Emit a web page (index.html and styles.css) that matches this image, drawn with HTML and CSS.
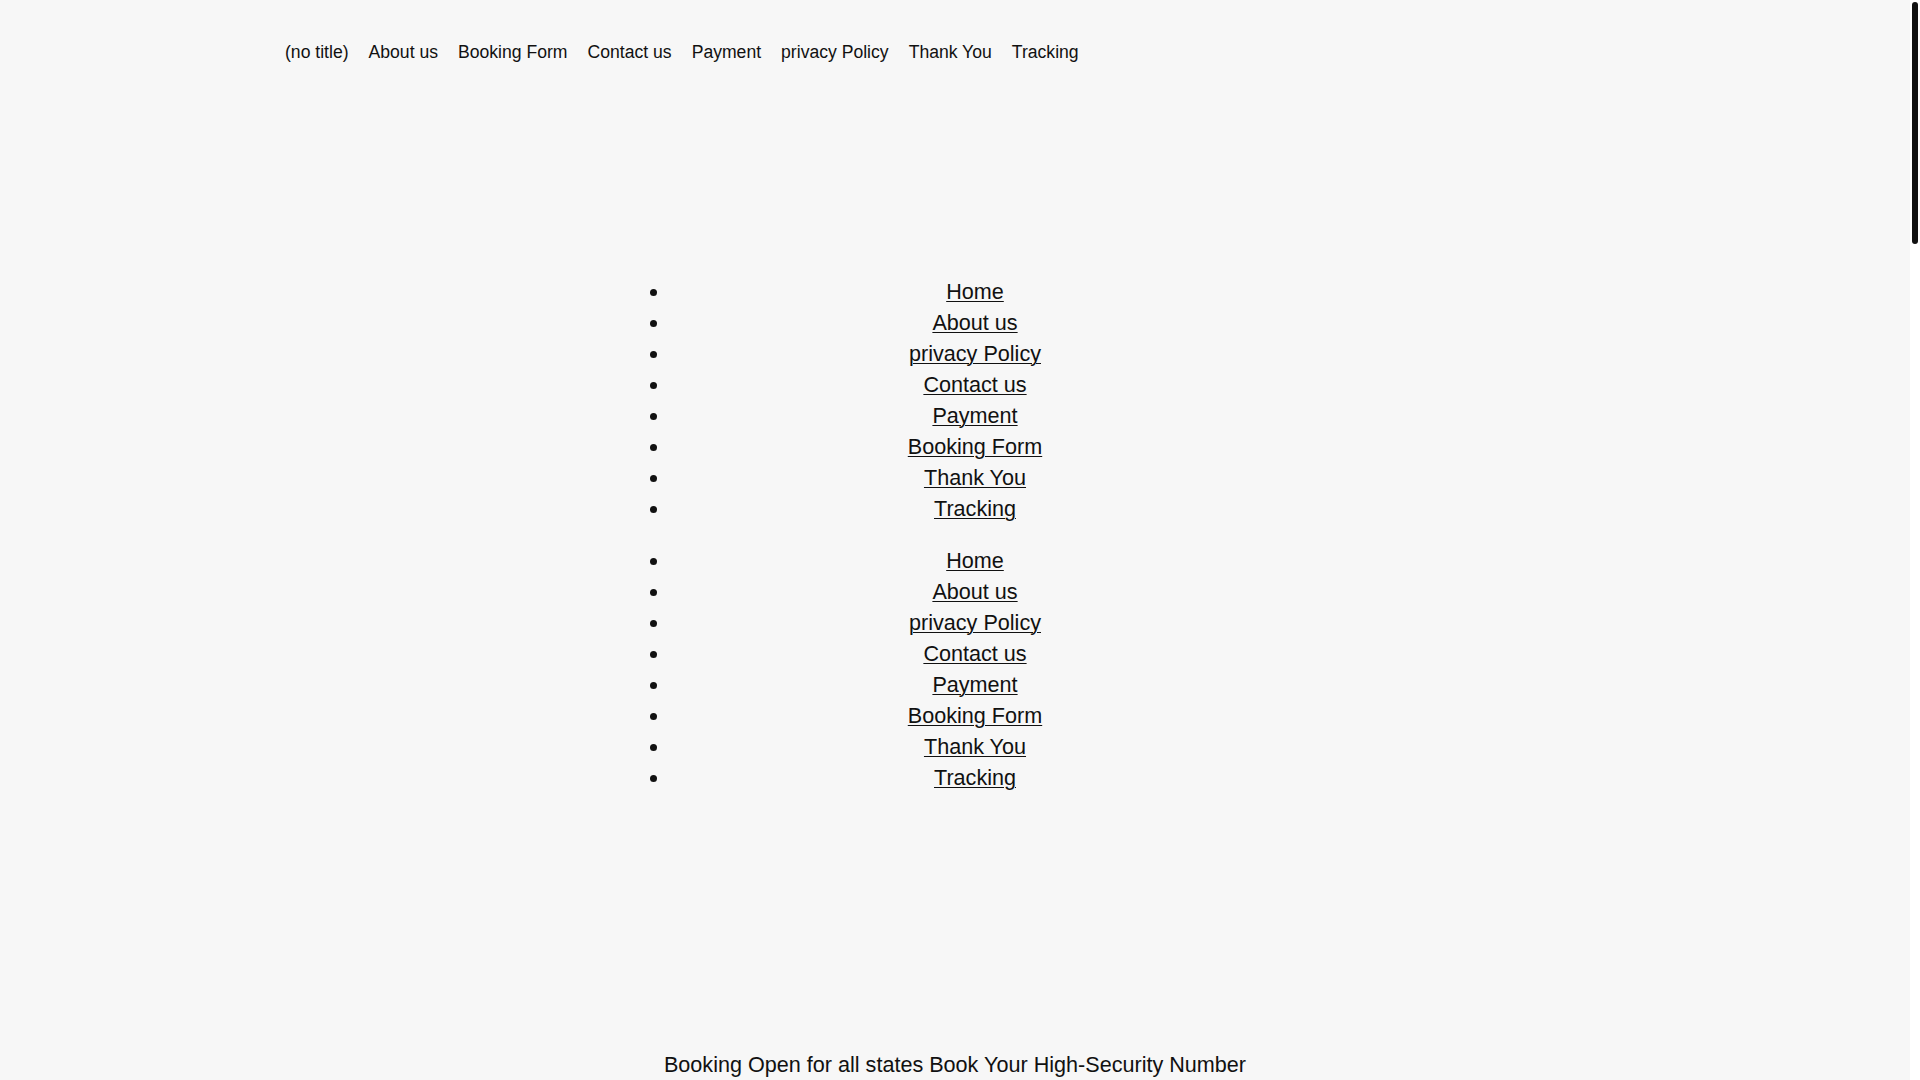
FILE: index.html
```html
<!DOCTYPE html>
<html lang="en">
<head>
<meta charset="utf-8">
<title>Booking</title>
<link rel="stylesheet" href="styles.css">
</head>
<body>
<div class="page">
  <header class="site-header">
    <nav class="top-nav">
      <a href="#">(no title)</a>
      <a href="#">About us</a>
      <a href="#">Booking Form</a>
      <a href="#">Contact us</a>
      <a href="#">Payment</a>
      <a href="#">privacy Policy</a>
      <a href="#">Thank You</a>
      <a href="#">Tracking</a>
    </nav>
  </header>
  <main class="content">
    <ul class="menu-list first">
      <li><a href="#">Home</a></li>
      <li><a href="#">About us</a></li>
      <li><a href="#">privacy Policy</a></li>
      <li><a href="#">Contact us</a></li>
      <li><a href="#">Payment</a></li>
      <li><a href="#">Booking Form</a></li>
      <li><a href="#">Thank You</a></li>
      <li><a href="#">Tracking</a></li>
    </ul>
    <ul class="menu-list second">
      <li><a href="#">Home</a></li>
      <li><a href="#">About us</a></li>
      <li><a href="#">privacy Policy</a></li>
      <li><a href="#">Contact us</a></li>
      <li><a href="#">Payment</a></li>
      <li><a href="#">Booking Form</a></li>
      <li><a href="#">Thank You</a></li>
      <li><a href="#">Tracking</a></li>
    </ul>
    <p class="tagline">Booking Open for all states Book Your High-Security Number</p>
  </main>
</div>
<div class="fake-scrollbar" aria-hidden="true"><div class="fake-thumb"></div></div>
</body>
</html>
```
FILE: styles.css
```css
html {
  background: #f7f7f7;
}
body {
  margin: 0;
  background: #f7f7f7;
  color: #111111;
  font-family: "Liberation Sans", Arial, sans-serif;
  overflow-x: hidden;
}
.page {
  width: calc(100% - 10px);
}
.site-header {
  padding: 40px 0 0 285px;
}
.top-nav {
  display: flex;
  gap: 20px;
  font-size: 17.6px;
  line-height: 24px;
}
.top-nav a {
  color: #111111;
  text-decoration: none;
}
.content {
  min-height: 4600px;
}
.menu-list {
  width: 610px;
  margin: 0 auto;
  padding: 0 0 0 40px;
  text-align: center;
  font-size: 21.6px;
  line-height: 31px;
}
.menu-list.first {
  margin-top: 212px;
}
.menu-list.second {
  margin-top: 20.5px;
}
.menu-list a {
  color: #111111;
  text-decoration: underline;
  text-underline-offset: 2px;
  text-decoration-thickness: 1px;
}
.tagline {
  margin: 256px 0 0;
  text-align: center;
  font-size: 21.6px;
  line-height: 31px;
}
.fake-scrollbar {
  position: fixed;
  top: 0;
  right: 0;
  width: 10px;
  height: 100vh;
  background: #ffffff;
}
.fake-thumb {
  margin: 2px 0 0 2px;
  width: 6px;
  height: 242px;
  border-radius: 3px;
  background: #111111;
}
```
